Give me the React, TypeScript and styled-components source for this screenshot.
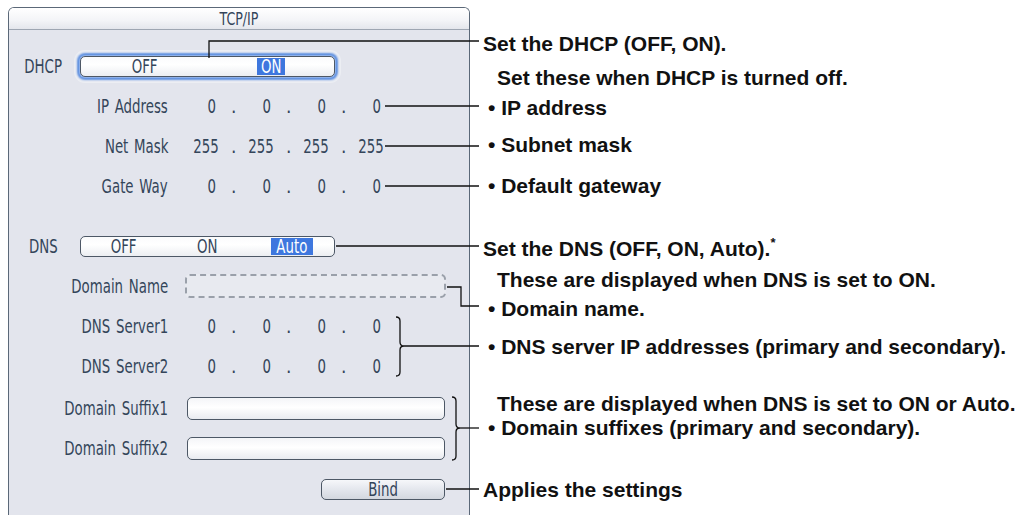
import React from "react";
import styled, { createGlobalStyle } from "styled-components";

const GlobalStyle = createGlobalStyle`
  html, body {
    margin: 0;
    padding: 0;
    background: #fff;
  }
`;

type NoteKind = "head" | "sub" | "item";

const notes: { text: string; kind: NoteKind; gap: number; star?: boolean }[] = [
  { text: "Set the DHCP (OFF, ON).", kind: "head", gap: 32 },
  { text: "Set these when DHCP is turned off.", kind: "sub", gap: 10 },
  { text: "• IP address", kind: "item", gap: 6 },
  { text: "• Subnet mask", kind: "item", gap: 13 },
  { text: "• Default gateway", kind: "item", gap: 17 },
  { text: "Set the DNS (OFF, ON, Auto).", kind: "head", gap: 39, star: true },
  { text: "These are displayed when DNS is set to ON.", kind: "sub", gap: 7 },
  { text: "• Domain name.", kind: "item", gap: 5 },
  { text: "• DNS server IP addresses (primary and secondary).", kind: "item", gap: 14 },
  { text: "These are displayed when DNS is set to ON or Auto.", kind: "sub", gap: 33 },
  { text: "• Domain suffixes (primary and secondary).", kind: "item", gap: 0 },
  { text: "Applies the settings", kind: "head", gap: 38 },
];

const Toggle = ({
  options,
  selected,
  focused,
}: {
  options: string[];
  selected: number;
  focused?: boolean;
}) => (
  <ToggleBox $focused={focused}>
    {options.map((o, i) => (
      <Option key={o}>
        <OptionText $active={i === selected}>
          <Narrow $origin="center">{o}</Narrow>
        </OptionText>
      </Option>
    ))}
  </ToggleBox>
);

const IpValue = ({ parts }: { parts: number[] }) => (
  <IpWrap>
    {parts.map((p, i) => (
      <React.Fragment key={i}>
        <Octet>
          <Narrow $origin="right">{p}</Narrow>
        </Octet>
        {i < parts.length - 1 && <Dot>.</Dot>}
      </React.Fragment>
    ))}
  </IpWrap>
);

const Label = ({ children }: { children: string }) => (
  <SubLabel>
    <Narrow $origin="right">{children}</Narrow>
  </SubLabel>
);

const App = () => {
  return (
    <>
      <GlobalStyle />
      <Page>
        <Panel>
          <TitleBar>
            <Narrow $origin="center">TCP/IP</Narrow>
          </TitleBar>
          <Body>
            <Row>
              <MainLabel>
                <Narrow $origin="center">DHCP</Narrow>
              </MainLabel>
              <Toggle options={["OFF", "ON"]} selected={1} focused />
            </Row>
            <Row>
              <Label>IP Address</Label>
              <IpValue parts={[0, 0, 0, 0]} />
            </Row>
            <Row>
              <Label>Net Mask</Label>
              <IpValue parts={[255, 255, 255, 255]} />
            </Row>
            <Row>
              <Label>Gate Way</Label>
              <IpValue parts={[0, 0, 0, 0]} />
            </Row>
            <Gap $h={20} />
            <Row>
              <MainLabel>
                <Narrow $origin="center">DNS</Narrow>
              </MainLabel>
              <Toggle options={["OFF", "ON", "Auto"]} selected={2} />
            </Row>
            <Row>
              <Label>Domain Name</Label>
              <DashedField />
            </Row>
            <Row>
              <Label>DNS Server1</Label>
              <IpValue parts={[0, 0, 0, 0]} />
            </Row>
            <Row>
              <Label>DNS Server2</Label>
              <IpValue parts={[0, 0, 0, 0]} />
            </Row>
            <Gap $h={2} />
            <Row>
              <Label>Domain Suffix1</Label>
              <TextField />
            </Row>
            <Row>
              <Label>Domain Suffix2</Label>
              <TextField />
            </Row>
            <ButtonRow>
              <BindButton>
                <Narrow $origin="center">Bind</Narrow>
              </BindButton>
            </ButtonRow>
          </Body>
        </Panel>

        <Notes>
          {notes.map((n) => (
            <Note key={n.text} $kind={n.kind} $gap={n.gap}>
              {n.text}
              {n.star && <Star>*</Star>}
            </Note>
          ))}
        </Notes>

        <Leaders width="1032" height="515" viewBox="0 0 1032 515">
          <g fill="none" stroke="#111" strokeWidth="1.3">
            <path d="M209 58 V41 H479" />
            <path d="M385 106 H479" />
            <path d="M385 146 H479" />
            <path d="M385 186 H479" />
            <path d="M336 246 H479" />
            <path d="M447 287 H461 V306 H479" />
            <path d="M396 317 Q400 317 400 321 L400 342 Q400 346 404 346 Q400 346 400 350 L400 372 Q400 376 396 376" />
            <path d="M404 346 H479" />
            <path d="M452 397 Q456 397 456 401 L456 424 Q456 428 460 428 Q456 428 456 432 L456 456 Q456 460 452 460" />
            <path d="M460 428 H479" />
            <path d="M446 489 H479" />
          </g>
        </Leaders>
      </Page>
    </>
  );
};

export default App;

const Page = styled.div`
  position: relative;
  width: 1032px;
  height: 515px;
  overflow: hidden;
  display: flex;
  align-items: flex-start;
`;

const Panel = styled.div`
  margin: 7px 0 0 8px;
  width: 462px;
  height: 520px;
  box-sizing: border-box;
  display: flex;
  flex-direction: column;
  border: 1px solid #5b6878;
  border-bottom: none;
  border-radius: 6px 6px 0 0;
  overflow: hidden;
  font-family: "DejaVu Sans Condensed", "Liberation Sans", sans-serif;
  font-size: 19px;
  word-spacing: 2px;
  color: #34455a;
`;

/* the instrument font is much narrower than anything installed */
const Narrow = styled.span<{ $origin: string }>`
  display: inline-block;
  white-space: nowrap;
  transform: scaleX(0.78);
  transform-origin: ${(p) => p.$origin};
`;

const TitleBar = styled.div`
  height: 21px;
  line-height: 21px;
  text-align: center;
  font-size: 18px;
  background: linear-gradient(#ffffff, #f3f4f7 60%, #e4e6ec);
  border-bottom: 1px solid #9ea6b2;
`;

const Body = styled.div`
  flex: 1;
  background: #e3e5ed;
  padding-top: 16px;
  display: flex;
  flex-direction: column;
`;

const Row = styled.div`
  height: 40px;
  display: flex;
  align-items: center;
`;

const Gap = styled.div<{ $h: number }>`
  height: ${(p) => p.$h}px;
`;

const MainLabel = styled.div`
  width: 48px;
  margin-left: 10px;
  text-align: center;
`;

const SubLabel = styled.div`
  width: 159px;
  text-align: right;
  white-space: nowrap;
`;

const ToggleBox = styled.div<{ $focused?: boolean }>`
  margin-left: 13px;
  width: 255px;
  height: 21px;
  box-sizing: border-box;
  display: flex;
  align-items: center;
  border: 1px solid #4d5866;
  border-radius: 5px;
  background: linear-gradient(#fafbfc, #ffffff 40%, #eceef2);
  box-shadow: ${(p) =>
    p.$focused
      ? "0 0 0 1px #8db0ea, 0 0 2px 3px #5f90e0, 0 0 0 6px #eceef3"
      : "none"};
`;

const Option = styled.div`
  flex: 1;
  text-align: center;
  line-height: 19px;
`;

const OptionText = styled.span<{ $active: boolean }>`
  display: inline-block;
  padding: 0 1px;
  line-height: 17px;
  background: ${(p) => (p.$active ? "#3e77de" : "transparent")};
  color: ${(p) => (p.$active ? "#fff" : "inherit")};
`;

const IpWrap = styled.div`
  margin-left: 18px;
  display: flex;
  align-items: center;
`;

const Octet = styled.span`
  width: 30px;
  text-align: right;
`;

const Dot = styled.span`
  width: 25px;
  padding-left: 15px;
  box-sizing: border-box;
`;

const DashedField = styled.div`
  margin-left: 17px;
  width: 261px;
  height: 24px;
  box-sizing: border-box;
  border: 2px dashed #9aa0aa;
  border-radius: 5px;
  background: #e8eaf0;
`;

const TextField = styled.div`
  margin-left: 19px;
  width: 258px;
  height: 23px;
  box-sizing: border-box;
  border: 1px solid #4d5866;
  border-radius: 5px;
  background: linear-gradient(#f4f5f8, #ffffff 45%, #e9ebf0);
`;

const ButtonRow = styled(Row)`
  justify-content: flex-end;
  padding-right: 24px;
  margin-top: 1px;
`;

const BindButton = styled.div`
  width: 124px;
  height: 21px;
  box-sizing: border-box;
  border: 1px solid #4d5866;
  border-radius: 5px;
  background: linear-gradient(#f6f7fa, #e2e5ec 55%, #d3d7df);
  display: flex;
  align-items: center;
  justify-content: center;
`;

const Notes = styled.div`
  display: flex;
  flex-direction: column;
  padding-left: 13px;
  font-family: "Liberation Sans", Arial, sans-serif;
  font-weight: 700;
  font-size: 21px;
  color: #111;
`;

const Note = styled.div<{ $kind: NoteKind; $gap: number }>`
  height: 24px;
  line-height: 24px;
  white-space: nowrap;
  margin-top: ${(p) => p.$gap}px;
  padding-left: ${(p) => (p.$kind === "sub" ? 14 : p.$kind === "item" ? 5 : 0)}px;
`;

const Star = styled.sup`
  font-size: 13px;
  line-height: 0;
  vertical-align: 9px;
`;

const Leaders = styled.svg`
  position: absolute;
  left: 0;
  top: 0;
  pointer-events: none;
`;
